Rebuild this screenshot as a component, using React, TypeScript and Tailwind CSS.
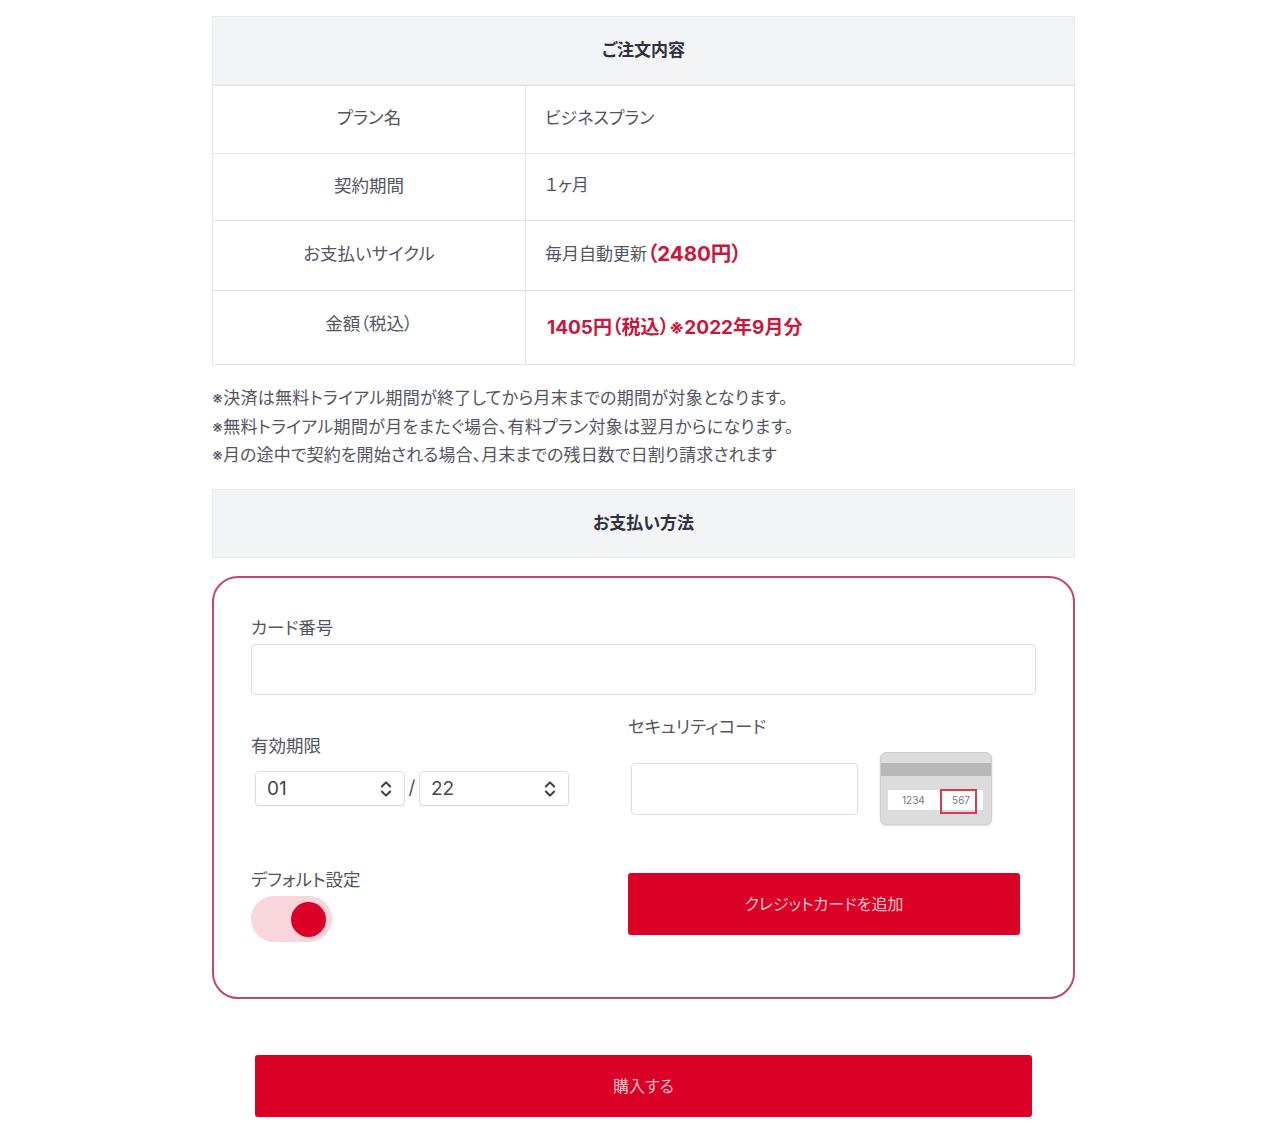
import React from 'react';
import { ChevronsUpDown } from 'lucide-react';

const font = { jp: 'font-["Inter","Noto_Sans_CJK_JP",sans-serif]' };

const rows = [
    { label: 'プラン名', rowClass: 'h-[68px]', labelClass: 'pb-[2px]', value: <span>ビジネスプラン</span> },
    { label: '契約期間', rowClass: 'h-[67px]', labelClass: 'pb-[2px]', value: <span>１ヶ月</span> },
    {
        label: 'お支払いサイクル',
        rowClass: 'h-[70px]',
        labelClass: 'pb-[2px]',
        value: (
            <span className="flex items-center text-[17px]">
                毎月自動更新
                <span className="text-[20.5px] font-bold text-[#c9173d]">（2480円）</span>
            </span>
        ),
    },
    {
        label: '金額（税込）',
        rowClass: 'h-[74px]',
        labelClass: 'pb-1.5',
        value: <span className="pl-0.5 text-[19px] font-bold text-[#c9173d] relative top-[2px]">1405円（税込）※2022年9月分</span>,
    },
];

const SectionTitle = ({ title }: { title: string }) => (
    <div className="h-[69px] flex items-center justify-center bg-[#f3f4f6] border border-[#e9eaec] text-[17px] font-bold text-[#2f3040]">
        {title}
    </div>
);

const MonthSelect = ({ value }: { value: string }) => (
    <div className="w-[150px] h-[35px] flex items-center justify-between pl-[11px] pr-[8px] bg-white border border-[#dcdee2] rounded-[4px] shadow-[0_1px_1px_rgba(0,0,0,0.04)] text-[19px] text-[#43454f]">
        <span className="pt-[1px]">{value}</span>
        <ChevronsUpDown className="w-[20px] h-[20px] text-[#3a3c46]" strokeWidth={2.4} />
    </div>
);

const CardHint = () => (
    <div className="w-[112px] h-[73px] ml-[22px] pt-[10px] bg-[#dcdcdc] border border-[#cfcfcf] rounded-[6px] shadow-sm">
        <div className="h-[13px] bg-[#b8b8b8]" />
        <div className="mt-[14px] ml-[7px] mr-[8px] h-[20px] bg-white flex items-center justify-between relative text-[10px] text-[#777]">
            <span className="ml-[14px]">1234</span>
            <span className="mr-[13px] relative z-10">567</span>
            <div className="absolute right-[6px] top-[-1px] w-[37px] h-[25px] border-2 border-[#d93a50]" />
        </div>
    </div>
);

export default function App() {
    return (
        <div className={`${font.jp} [font-feature-settings:"palt"] min-h-[1143px] bg-white pt-4 pl-[212px] text-[17px] text-[#53555f]`}>
            <div className="w-[863px]">
                <SectionTitle title="ご注文内容" />
                <table className="w-full table-fixed border-collapse">
                    <tbody>
                        {rows.map((row) => (
                            <tr key={row.label} className={`${row.rowClass} border border-[#e4e5e8]`}>
                                <td className={`w-[313px] text-center text-[17.5px] border-r border-[#e4e5e8] ${row.labelClass}`}>{row.label}</td>
                                <td className="pl-[19px] pb-[2px]">{row.value}</td>
                            </tr>
                        ))}
                    </tbody>
                </table>

                <div className="mt-[19px] leading-[28.7px]">
                    <p className="tracking-[0.3px]">※決済は無料トライアル期間が終了してから月末までの期間が対象となります。</p>
                    <p className="tracking-[0.3px]">※無料トライアル期間が月をまたぐ場合、有料プラン対象は翌月からになります。</p>
                    <p className="tracking-[0.1px]">※月の途中で契約を開始される場合、月末までの残日数で日割り請求されます</p>
                </div>

                <div className="mt-[19px]">
                    <SectionTitle title="お支払い方法" />
                </div>

                <div className="mt-[18px] h-[423px] border-2 border-[#c24a66] rounded-[26px] pt-[37px] px-[37px] text-[17.5px]">
                    <div className="leading-[26px]">カード番号</div>
                    <div className="mt-[3px] h-[51px] bg-white border border-[#dcdee2] rounded-[4px]" />

                    <div className="mt-[19px] flex">
                        <div className="w-[377px] pt-[19px]">
                            <div className="leading-[26px]">有効期限</div>
                            <div className="mt-[12px] ml-1 flex items-center">
                                <MonthSelect value="01" />
                                <span className="w-[14px] text-center text-[19px]">/</span>
                                <MonthSelect value="22" />
                            </div>
                        </div>
                        <div>
                            <div className="leading-[26px]">セキュリティコード</div>
                            <div className="mt-[12px] ml-[3px] flex items-center">
                                <div className="w-[227px] h-[52px] bg-white border border-[#dcdee2] rounded-[4px]" />
                                <CardHint />
                            </div>
                        </div>
                    </div>

                    <div className="mt-[42px] flex">
                        <div className="w-[377px]">
                            <div className="leading-[26px]">デフォルト設定</div>
                            <div className="mt-[3px] w-[81px] h-[46px] rounded-full bg-[#f9d5dc] flex items-center justify-end pr-[6px]">
                                <div className="w-[35px] h-[35px] rounded-full bg-[#db0025]" />
                            </div>
                        </div>
                        <button className="mt-[6px] w-[392px] h-[62px] bg-[#db0025] rounded-[3px] text-[16px] text-[#f3c4cc]">
                            クレジットカードを追加
                        </button>
                    </div>
                </div>

                <button className="block mt-[56px] ml-[43px] w-[777px] h-[62px] bg-[#db0025] rounded-[3px] text-[16px] text-[#f3c4cc]">
                    購入する
                </button>
            </div>
        </div>
    );
}
